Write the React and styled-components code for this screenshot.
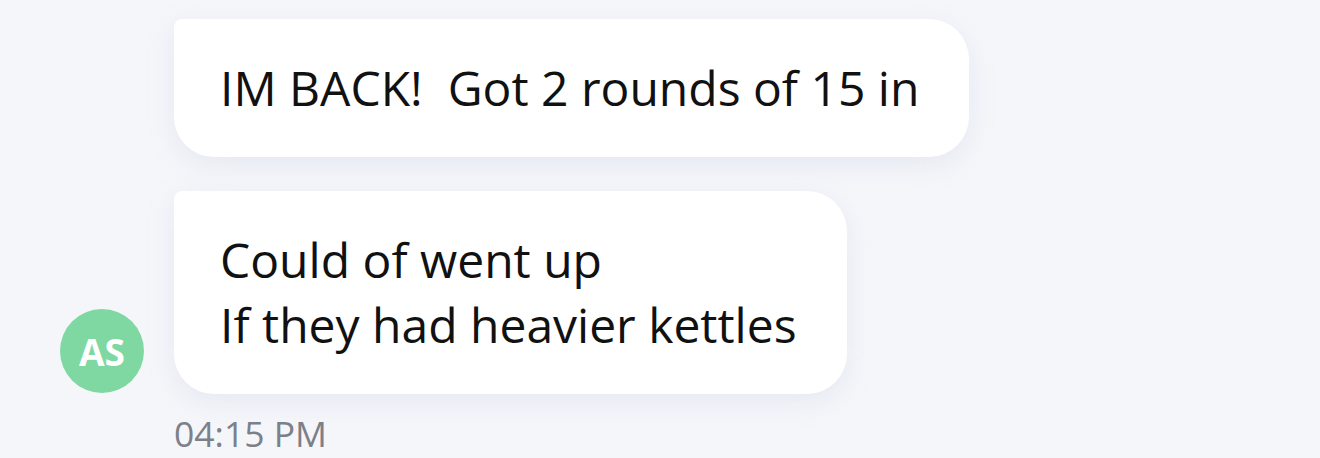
import { createGlobalStyle, styled } from "styled-components"

const GlobalStyle = createGlobalStyle`
    html, body {
        margin: 0;
        padding: 0;
        background: #f5f6fa;
    }
    body {
        font-family: "Open Sans", "Noto Sans", sans-serif;
    }
`

const Tela = styled.div`
    width: 1320px;
    height: 458px;
    overflow: hidden;
    box-sizing: border-box;
    padding: 19px 0 0 60px;
    background: #f5f6fa;
`

const Grupo = styled.div`
    display: flex;
    align-items: flex-end;
    gap: 30px;
`

const Avatar = styled.div`
    width: 84px;
    height: 84px;
    flex-shrink: 0;
    border-radius: 50%;
    background: #7fd8a1;
    color: #ffffff;
    display: flex;
    align-items: center;
    justify-content: center;
    font-size: 37px;
    font-weight: 700;
    margin-bottom: 1px;
`

const Coluna = styled.div`
    display: flex;
    flex-direction: column;
    align-items: flex-start;
    gap: 34px;
`

const Balao = styled.div`
    background: #ffffff;
    color: #111111;
    font-size: 48px;
    line-height: 65px;
    padding: 36px 50px 37px 46px;
    border-radius: 8px 40px 40px 40px;
    box-shadow: 0 8px 24px rgba(190, 196, 225, 0.25);
    white-space: pre-wrap;
`

const Horario = styled.div`
    margin: 16px 0 0 114px;
    font-size: 35.5px;
    line-height: 46px;
    color: #7c8089;
`

const mensagens = [
    { id: 1, linhas: ["IM BACK!  Got 2 rounds of 15 in"] },
    { id: 2, linhas: ["Could of went up", "If they had heavier kettles"] },
]

function App() {
    return (
        <>
            <GlobalStyle />
            <Tela>
                <Grupo>
                    <Avatar>AS</Avatar>
                    <Coluna>
                        {mensagens.map((m) => (
                            <Balao key={m.id}>
                                {m.linhas.map((l) => (
                                    <div key={l}>{l}</div>
                                ))}
                            </Balao>
                        ))}
                    </Coluna>
                </Grupo>
                <Horario>04:15 PM</Horario>
            </Tela>
        </>
    )
}

export default App
